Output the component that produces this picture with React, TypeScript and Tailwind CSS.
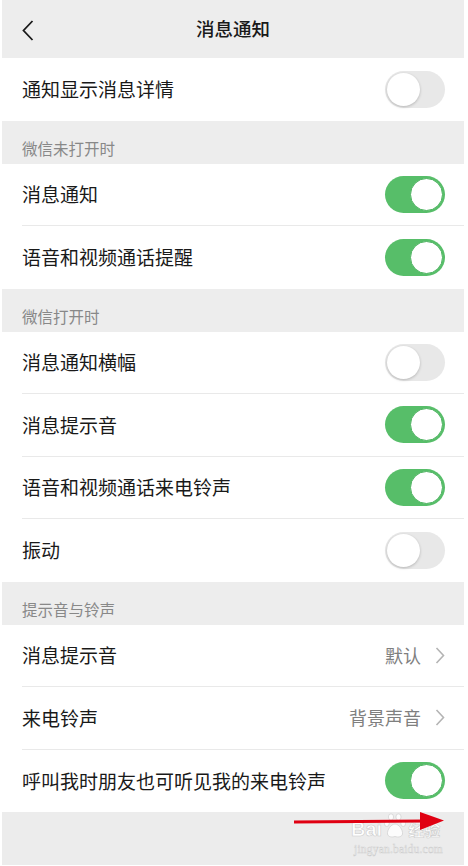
import React from 'react';

const FONT = { fontFamily: '"Noto Sans CJK SC", "Noto Sans", sans-serif' };

type Row = {
  label: string;
  on?: boolean;
  value?: string;
};

const Toggle: React.FC<{ on: boolean }> = ({ on }) => (
  <span
    className={`relative flex h-[37px] w-[60px] shrink-0 items-center rounded-full ${
      on ? 'bg-[#57be69] justify-end' : 'bg-[#e8e8e8] justify-start'
    }`}
  >
    <span
      className={`h-[33px] w-[33px] rounded-full bg-white ${
        on
          ? 'mr-[2px] border border-[#4fb462]'
          : 'ml-[2px] shadow-[0_1px_3px_rgba(0,0,0,0.22)]'
      }`}
    />
  </span>
);

const Chevron = () => (
  <svg width="10" height="17" viewBox="0 0 10 17" className="ml-[14px] shrink-0">
    <polyline points="1.5,1 8.5,8.5 1.5,16" fill="none" stroke="#b4b4b4" strokeWidth="1.6" />
  </svg>
);

const SectionTitle: React.FC<{ title: string }> = ({ title }) => (
  <div className="flex h-[43px] items-end bg-[#ededed] pb-[8px] pl-[20px] text-[15.5px] leading-[16px] text-[#888888]">
    {title}
  </div>
);

const Group: React.FC<{ rows: Row[] }> = ({ rows }) => (
  <div className="bg-white">
    {rows.map((r, i) => (
      <div key={r.label} className="pl-[20px]">
        <div
          className={`flex h-[62.5px] items-center pr-[19px] ${
            i < rows.length - 1 ? 'border-b border-[#e9e9e9]' : ''
          }`}
        >
          <span className="flex-1 text-[19px] text-[#191919]">{r.label}</span>
          {r.value !== undefined ? (
            <span className="flex items-center text-[18px] text-[#7f7f7f]">
              {r.value}
              <Chevron />
            </span>
          ) : (
            <Toggle on={!!r.on} />
          )}
        </div>
      </div>
    ))}
  </div>
);

const BaiduPaw = () => (
  <svg width="22" height="26" viewBox="0 0 22 26">
    <g fill="#ffffff" fillOpacity="0.85" stroke="#cfcfcf" strokeWidth="0.7">
      <ellipse cx="7" cy="4" rx="2.6" ry="3.2" />
      <ellipse cx="14.5" cy="4" rx="2.6" ry="3.2" />
      <ellipse cx="2.8" cy="10.5" rx="2.4" ry="3" />
      <ellipse cx="19.2" cy="10.5" rx="2.4" ry="3" />
      <path d="M11 11 C7 11 3 17 3.5 21 C4 24 8 24.5 11 23.5 C14 24.5 18 24 18.5 21 C19 17 15 11 11 11 Z" />
    </g>
  </svg>
);

export default function App() {
  return (
    <div className="min-h-[866px] w-[468px] bg-white pl-[2px] pr-[4px]" style={FONT}>
      <div className="w-[462px]">
        {/* Header */}
        <div className="relative flex h-[58px] items-center justify-center bg-[#ededed]">
          <svg
            width="12"
            height="21"
            viewBox="0 0 12 21"
            className="absolute left-[20px] top-[20px]"
          >
            <polyline points="10.5,1 1.5,10.5 10.5,20" fill="none" stroke="#1a1a1a" strokeWidth="1.8" />
          </svg>
          <span className="text-[18.5px] font-medium text-[#191919]">消息通知</span>
        </div>

        <Group rows={[{ label: '通知显示消息详情', on: false }]} />

        <SectionTitle title="微信未打开时" />
        <Group
          rows={[
            { label: '消息通知', on: true },
            { label: '语音和视频通话提醒', on: true },
          ]}
        />

        <SectionTitle title="微信打开时" />
        <Group
          rows={[
            { label: '消息通知横幅', on: false },
            { label: '消息提示音', on: true },
            { label: '语音和视频通话来电铃声', on: true },
            { label: '振动', on: false },
          ]}
        />

        <SectionTitle title="提示音与铃声" />
        <Group
          rows={[
            { label: '消息提示音', value: '默认' },
            { label: '来电铃声', value: '背景声音' },
            { label: '呼叫我时朋友也可听见我的来电铃声', on: true },
          ]}
        />

        {/* Footer with annotation */}
        <div className="relative h-[53px] bg-[#ececec]">
          <div className="absolute left-[349px] top-[1px] flex items-end">
            <span
              className="mb-[2px] text-[20px] font-bold leading-[16px] text-white"
              style={{ fontFamily: '"Liberation Sans", sans-serif', WebkitTextStroke: '0.6px #cdcdcd' }}
            >
              Bai
            </span>
            <span className="mx-[2px]">
              <BaiduPaw />
            </span>
            <span
              className="mb-[2px] text-[16px] font-bold leading-[16px] text-white"
              style={{ WebkitTextStroke: '0.6px #cdcdcd' }}
            >
              经验
            </span>
          </div>
          <span
            className="absolute left-[352px] top-[31px] text-[11.5px] leading-[12px] tracking-[0.2px] text-white"
            style={{ fontFamily: '"Liberation Serif", serif', WebkitTextStroke: '0.5px #cdcdcd' }}
          >
            jingyan.baidu.com
          </span>
          <svg width="160" height="24" viewBox="0 0 160 24" className="absolute left-[290px] top-[0px]">
            <line x1="2" y1="10" x2="132" y2="9" stroke="#e00012" strokeWidth="3" />
            <polygon points="128,0 152,8.5 128,18" fill="#e00012" />
          </svg>
        </div>
      </div>
    </div>
  );
}
